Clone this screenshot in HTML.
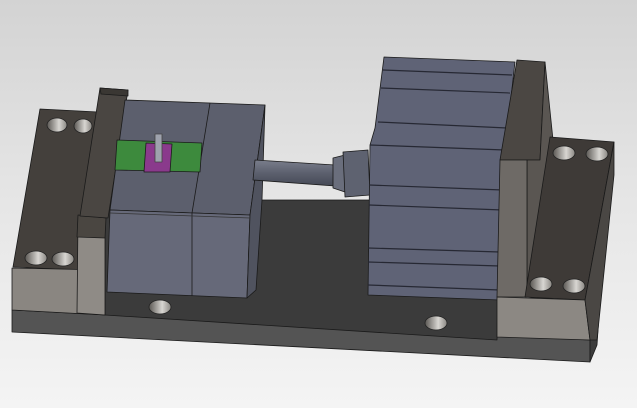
<!DOCTYPE html><html><head><style>html,body{margin:0;padding:0;width:637px;height:408px;overflow:hidden}</style></head><body>
<svg width="637" height="408" viewBox="0 0 637 408" xmlns="http://www.w3.org/2000/svg" stroke="#1a1a1a" stroke-width="0.8" stroke-linejoin="round">
<defs>
<linearGradient id="bg" x1="0" y1="0" x2="0" y2="1"><stop offset="0" stop-color="#d3d3d3"/><stop offset="0.5" stop-color="#e6e6e6"/><stop offset="1" stop-color="#f4f4f4"/></linearGradient>
<linearGradient id="hole" x1="0" y1="0" x2="1" y2="0"><stop offset="0" stop-color="#5a5753"/><stop offset="0.6" stop-color="#d8d6d2"/><stop offset="1" stop-color="#8a8782"/></linearGradient>
<linearGradient id="rod" x1="0" y1="0" x2="0" y2="1"><stop offset="0" stop-color="#7a7e8c"/><stop offset="0.5" stop-color="#5c606e"/><stop offset="1" stop-color="#454955"/></linearGradient>
</defs>
<rect width="637" height="408" fill="url(#bg)" stroke="none"/>
<!-- base plate -->
<polygon points="12,310 590,340 590,362 12,332" fill="#545454"/>
<polygon points="590,340 600,300 597,345 590,362" fill="#3c3c3c"/>
<polygon points="105,200 500,200 497,340 105,315" fill="#3b3b3b"/>
<!-- left block -->
<polygon points="40,109 98,112 80,270 13,267" fill="#44403c"/>
<polygon points="12,268 105,270 105,315 12,310" fill="#8a8681"/>
<polygon points="78,218 105,220 105,315 77,313" fill="#8f8b86"/>
<polygon points="78,215 106,218 105,238 77,237" fill="#4a4641"/>
<!-- left upright -->
<polygon points="100,88 128,90 108,218 80,216" fill="#4a4642"/>
<polygon points="100,88 128,90 128,96 101,94" fill="#3a3733"/>
<!-- holes left -->
<g stroke="#222"><ellipse cx="57" cy="125" rx="10" ry="7" fill="url(#hole)"/><ellipse cx="83" cy="126" rx="9" ry="7" fill="url(#hole)"/><ellipse cx="36" cy="258" rx="11" ry="7" fill="url(#hole)"/><ellipse cx="63" cy="259" rx="11" ry="7" fill="url(#hole)"/><ellipse cx="160" cy="307" rx="11" ry="7" fill="url(#hole)"/><ellipse cx="436" cy="323" rx="11" ry="7" fill="url(#hole)"/></g>
<!-- mold -->
<polygon points="125,100 265,105 250,215 110,210" fill="#5c5f6d"/>
<polygon points="110,210 250,215 247,298 107,292" fill="#666979"/>
<polygon points="265,105 250,215 247,298 256,290 262,200" fill="#50535f"/>
<line x1="210" y1="103" x2="192" y2="213"/><line x1="192" y1="213" x2="192" y2="296"/>
<line x1="110" y1="213" x2="250" y2="218" stroke="#333"/>
<polygon points="117,140 202,143 200,172 115,170" fill="#3d8a3d"/>
<polygon points="146,143 172,144 170,172 144,172" fill="#8a3a8c"/>
<rect x="155" y="134" width="7" height="28" fill="#9ea2ad" stroke="#444"/>
<!-- rod -->
<polygon points="255,160 335,165 335,186 253,180" fill="url(#rod)"/>
<polygon points="333,158 345,155 345,192 333,188" fill="#6a6e7c"/>
<polygon points="343,152 368,150 370,195 345,197" fill="#5e6270"/>
<!-- cylinder -->
<polygon points="384,57 515,62 505,150 500,300 368,295 370,145 375,128" fill="#5f6376"/>
<g stroke="#262833" stroke-width="1.2">
<line x1="383" y1="70" x2="512" y2="75"/><line x1="381" y1="88" x2="510" y2="93"/><line x1="378" y1="122" x2="507" y2="128"/><line x1="370" y1="145" x2="505" y2="150"/><line x1="369" y1="185" x2="503" y2="190"/><line x1="369" y1="205" x2="503" y2="210"/><line x1="368" y1="248" x2="500" y2="252"/><line x1="368" y1="262" x2="500" y2="266"/><line x1="368" y1="285" x2="500" y2="290"/></g>
<!-- right upright -->
<polygon points="517,60 545,62 540,160 527,160 500,160" fill="#4b4743"/>
<polygon points="545,62 553,140 548,300 527,297 527,160 540,160" fill="#5a5652"/>
<polygon points="500,160 527,160 527,297 497,297" fill="#6e6a66"/>
<!-- right block -->
<polygon points="550,137 614,142 585,300 525,297" fill="#3e3a37"/>
<polygon points="497,297 585,300 590,340 497,337" fill="#8c8883"/>
<polygon points="585,300 614,142 614,175 597,340 590,340" fill="#4a4744"/>
<g stroke="#222"><ellipse cx="564" cy="153" rx="11" ry="7" fill="url(#hole)"/><ellipse cx="597" cy="154" rx="11" ry="7" fill="url(#hole)"/><ellipse cx="541" cy="284" rx="11" ry="7" fill="url(#hole)"/><ellipse cx="574" cy="286" rx="11" ry="7" fill="url(#hole)"/></g>
</svg>
</body></html>
